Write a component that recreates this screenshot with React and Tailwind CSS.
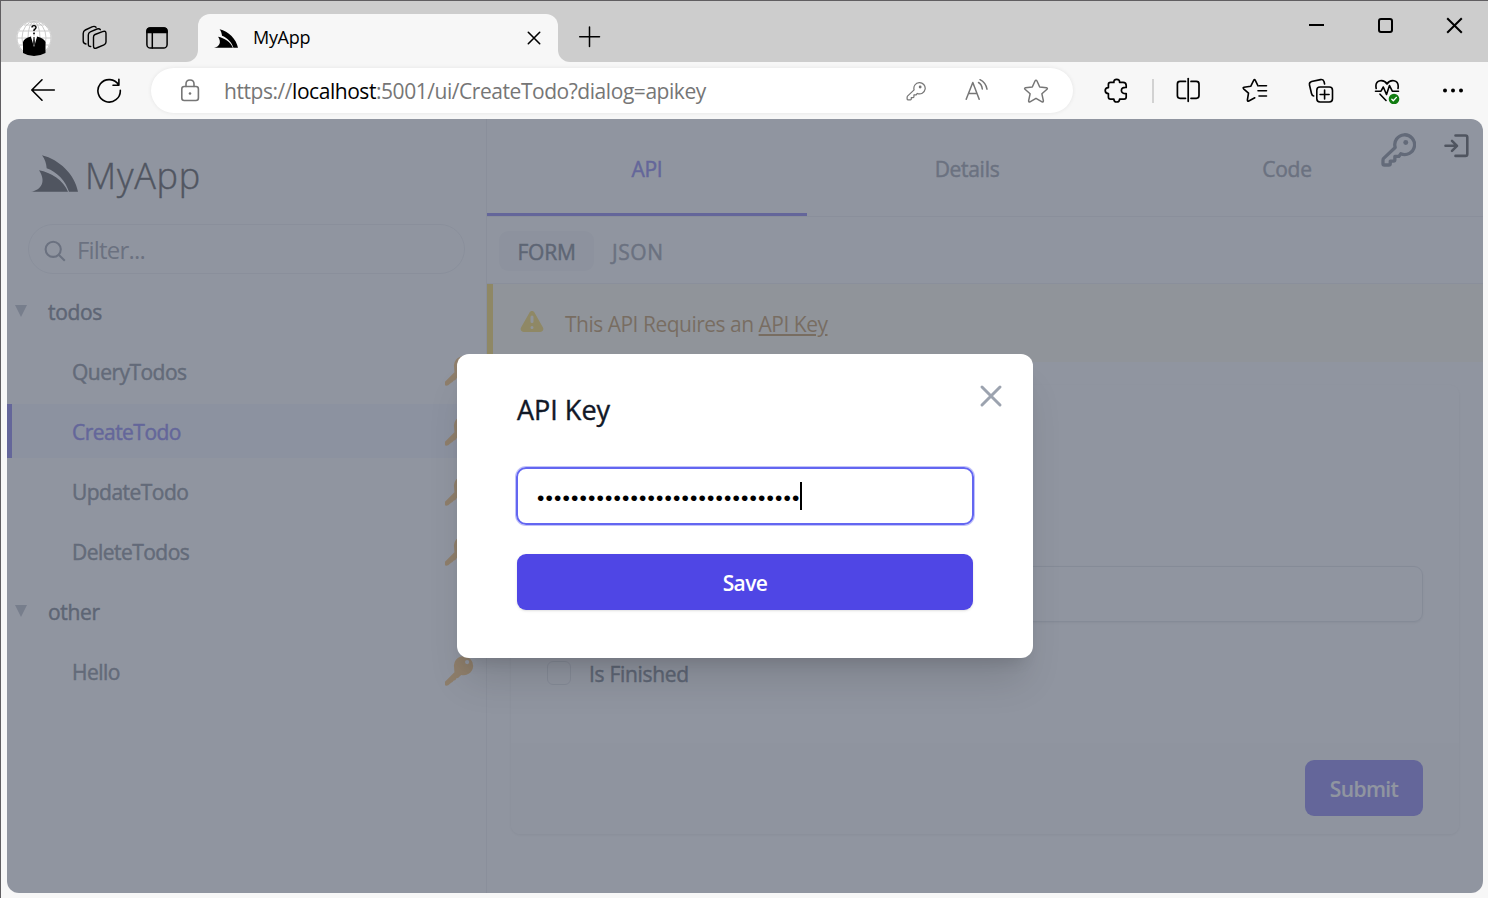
import React from 'react';

const Icon = ({ className = 'size-[26px]', box = '0 0 26 26', sw = 1.5, children }) => (
  <svg className={`shrink-0 ${className}`} viewBox={box} fill="none" stroke="currentColor" strokeWidth={sw} strokeLinecap="round" strokeLinejoin="round">
    {children}
  </svg>
);

const Logo = ({ className }) => (
  <svg className={`shrink-0 ${className}`} viewBox="0 0 141 110" fill="currentColor">
    <path d="M33 0C85 13 132 58 141 110H114C104 77 78 50 47 39C46 25 42 12 33 0Z" />
    <path d="M24 45C60 52 98 75 111 110H0C32 104 46 78 24 45Z" />
  </svg>
);

const KeyOutline = ({ className, sw }) => (
  <Icon className={className} box="0 0 106 106" sw={sw}>
    <path d="M43 47L8 80Q6 82 6 86V96Q6 100 10 100H24Q28 100 28 96V88H38Q42 88 42 84V74H54L60 66A30 30 0 1 0 43 47Z" />
    <circle cx="75" cy="32" r="7.5" fill="currentColor" stroke="none" />
  </Icon>
);

const KeySolid = () => (
  <svg className="h-[30px] w-[30px] shrink-0 text-[#f5a52e]" viewBox="0 0 90 92" fill="currentColor">
    <path fillRule="evenodd" d="M58 1A29 29 0 1 1 52 58L46 64Q43 69 37 68Q36 75 28 76Q26 81 21 82L12 90Q2 93 2 88V79L31 50L30 36A29 29 0 0 1 58 1ZM70 12A6.5 6.5 0 1 0 70 25A6.5 6.5 0 1 0 70 12Z" />
  </svg>
);

const Avatar = () => (
  <svg className="size-[36px] shrink-0" viewBox="0 0 36 36">
    <circle cx="18" cy="18" r="17.4" fill="#fff" />
    <g fill="none" stroke="#c4c4c4" strokeWidth="0.9">
      <circle cx="18" cy="18" r="17" />
      <ellipse cx="18" cy="18" rx="12" ry="16.5" />
      <ellipse cx="18" cy="18" rx="6" ry="16.5" />
      <path d="M18 1v34M1 18h34M3 11h30M3 25h30M8 5h20" />
    </g>
    <path d="M7 22Q8 18 15 16.5L18 18L21 16.5Q28 18 29.5 22V33Q24 36 18 36Q12 36 7 33Z" fill="#000" />
    <path d="M14.8 16.3L18 27L21.2 16.3Z" fill="#fff" />
    <path d="M17.4 17h1.2l.6 7-1.2 2-1.2-2Z" fill="#333" />
    <path d="M16 7.5Q16 5.6 18 5.6T20 7.5Q20 8.6 18 10V11" fill="none" stroke="#000" strokeWidth="1.4" />
    <circle cx="18" cy="13.4" r="0.9" />
  </svg>
);

const TitleBar = () => (
  <div className="flex h-[61px] bg-[#cdcdcd] text-black">
    <div className="flex w-[185px] items-center pt-[13px] pl-[15px]">
      <Avatar />
      <Icon className="ml-[30px] size-[26px]" sw={1.4}>
        <path d="M13 9.5L20.5 6.6Q24 5.4 24 8.5V17Q24 19 22 19.8L14.5 23Q11.5 24.2 11.5 21V12Q11.5 10.2 13 9.5Z" />
        <path d="M8.7 21.5Q6.3 21.6 6.3 19V10Q6.3 7.6 8.3 6.8L15 4Q17.5 3.2 18.3 4.7" />
        <path d="M4 19Q1.2 18.5 1.2 16V8.5Q1.2 6 3.3 5L10 1.8Q12.6 .8 14 2.2" />
      </Icon>
      <Icon className="mb-px ml-[36px] size-[26px]" sw={1.5}>
        <rect x="2.9" y="2.9" width="20.2" height="20.2" rx="3.6" />
        <path d="M3 7.5V6Q3 3 6 3H20Q23 3 23 6V7.5Z" fill="currentColor" />
        <path d="M8.3 8V23" />
      </Icon>
    </div>
    <div className="size-3 self-end bg-[#f7f7f7]">
      <div className="size-3 rounded-br-[12px] bg-[#cdcdcd]" />
    </div>
    <div className="mt-[13px] flex w-[360px] items-center rounded-t-[12px] bg-[#f7f7f7] pl-4">
      <Logo className="h-[19px] w-[24px]" />
      <span className="mb-px ml-[15px] flex-1 text-[18px] tracking-[-0.3px]">MyApp</span>
      <Icon className="mr-[11px] size-[26px]" sw={1.6}>
        <path d="M7.3 7.3L18.7 18.7M18.7 7.3L7.3 18.7" />
      </Icon>
    </div>
    <div className="size-3 self-end bg-[#f7f7f7]">
      <div className="size-3 rounded-bl-[12px] bg-[#cdcdcd]" />
    </div>
    <Icon className="mt-[23px] ml-[7px] size-[26px]" sw={1.5}>
      <path d="M12.5 3V22.5M2.7 12.8H22.5" />
    </Icon>
    <div className="mr-[21px] ml-auto flex gap-[43px] pt-[11px]">
      <Icon sw={2}><path strokeLinecap="butt" d="M6 13H21" /></Icon>
      <Icon sw={2}><rect x="7" y="7" width="13" height="13" rx="2" /></Icon>
      <Icon sw={2}><path strokeLinecap="butt" d="M6.2 6.2L20.8 20.8M20.8 6.2L6.2 20.8" /></Icon>
    </div>
  </div>
);

const AddressBar = () => (
  <div className="flex h-[45px] w-[922px] items-center rounded-full bg-white pr-6 pl-[26px] text-[#767676] shadow-[0_0_4px_rgba(0,0,0,0.08)]">
    <Icon sw={1.6}>
      <rect x="4.8" y="8.5" width="16.6" height="14" rx="2.4" />
      <path d="M9 8.5V6Q9 2 13 2T17 6V8.5" />
      <circle cx="13" cy="15.5" r="1.3" fill="currentColor" stroke="none" />
    </Icon>
    <div className="ml-[21px] flex-1 pt-[2px] text-[21px] whitespace-nowrap tracking-[-0.45px]">
      https://<span className="text-black">localhost</span>:5001/ui/CreateTodo?dialog=apikey
    </div>
    <div className="flex gap-[34px]">
      <div className="flex size-[26px] items-center justify-center"><KeyOutline className="size-[20px]" sw={6.5} /></div>
      <Icon sw={1.5}>
        <path d="M3.2 21.2L9.8 4.5L16.2 21.2M5.4 15.6H14" />
        <path d="M15.5 4.5Q18.8 6.3 19.3 11M17 1.7Q22.8 4.6 24 11.2" />
      </Icon>
      <Icon sw={1.5}>
        <path d="M13 2.3Q13.6 2.3 14 3L16.7 9L23.5 9.8Q25 10.2 24 11.3L18.9 15.8L20.4 22.8Q20.4 24.4 19 23.8L13 20.3L7 23.8Q5.6 24.4 5.6 22.8L7.1 15.8L2 11.3Q1 10.2 2.5 9.8L9.3 9L12 3Q12.4 2.3 13 2.3Z" />
      </Icon>
    </div>
  </div>
);

const Toolbar = () => (
  <div className="flex h-[57px] items-center bg-[#f7f7f7] pl-[29px] text-black">
    <Icon className="mb-[2px] size-[26px]" sw={1.6}><path d="M12 2.8L1.8 13L12 23.2M2 13H24.3" /></Icon>
    <Icon className="mb-[2px] ml-10 size-[26px]" sw={1.6}>
      <path d="M22.8 8.2A11.2 11.2 0 1 0 24.3 13.2M22.9 2.2V8.2H17" />
    </Icon>
    <div className="ml-[29px]"><AddressBar /></div>
    <Icon className="ml-[30px] size-[26px]" sw={1.7}>
      <path d="M7.5 4.4H10.9Q10.6 1.4 13.7 1.4T16.6 4.4H20Q23.2 4.4 23.2 7.4V9.4Q18.4 9.1 18.4 12.4T23.2 15.6V19Q23.2 21.2 21 21.2H16.6Q16.5 24 13.7 24T10.9 21.2H7.5Q5.4 21.2 5.4 19V15.6Q2.2 15.6 2.2 12.6T5.4 9.6V6.4Q5.4 4.4 7.5 4.4Z" />
    </Icon>
    <div className="ml-[23px] h-6 w-[2px] bg-[#d2d2d2]" />
    <Icon className="mb-px ml-[21px] size-[26px]" sw={1.7}>
      <path d="M13.2 1.5V24.3" />
      <path d="M10.5 4.4H5Q2.4 4.4 2.4 7V18.6Q2.4 21.3 5 21.3H10.5M16 4.4H21.3Q24 4.4 24 7V18.6Q24 21.3 21.3 21.3H16" />
    </Icon>
    <Icon className="mb-px ml-[41px] size-[26px]" sw={1.6}>
      <path d="M16 8.8L13.2 3.2Q12.5 1.8 11.8 3.2L8.7 9.3L2 10.2Q.5 10.6 1.6 11.8L6.5 16.2L5.4 23Q5.3 24.6 6.8 24L12.8 20.8" />
      <path d="M17 8.8H24.5M16 13.8H24.5M17 19H24.5" />
    </Icon>
    <Icon className="ml-10 size-[26px]" sw={1.6}>
      <path d="M5.7 18Q4 17.8 3.5 15.5L1.5 7Q1 4.3 3.6 3.5L12.5 1.6Q15 1.1 16 3.5L16.6 6" />
      <rect x="8.8" y="9" width="15.7" height="15" rx="3.2" />
      <path d="M16.6 12V21M12.1 16.5H21.1" />
    </Icon>
    <Icon className="ml-10 size-[26px]" sw={1.6}>
      <path d="M2.2 10.5Q.8 4 6 2.8Q10.5 2 13 6Q15.5 2 20 2.8Q25.2 4 24 10.5" />
      <path d="M1.5 13.2H7L9.3 9L12.5 16.5L15.5 7.5L18.3 13.2H24.5M6 16.2L12 22.5" />
      <circle cx="20" cy="21" r="5.3" fill="#107c10" stroke="none" />
      <path d="M17.8 21.2L19.3 22.8L22.4 19.4" stroke="#fff" strokeWidth="1.3" />
    </Icon>
    <Icon className="ml-10 size-[26px]">
      <g fill="currentColor" stroke="none">
        <circle cx="5" cy="12.4" r="2" /><circle cx="13" cy="12.4" r="2" /><circle cx="21" cy="12.4" r="2" />
      </g>
    </Icon>
  </div>
);

const Group = ({ name }) => (
  <div className="mb-[6px] flex h-[54px] items-center pl-2">
    <svg className="h-3 w-3 text-[#9ca3af]" viewBox="0 0 12 12" fill="currentColor"><path d="M0 0H12L6 12Z" /></svg>
    <span className="ml-[21px] pt-[3px] text-[21px] tracking-[-0.35px] text-[#374151] [-webkit-text-stroke:0.5px]">{name}</span>
  </div>
);

const Op = ({ name, active }) => (
  <div className={`mb-[6px] flex h-[54px] items-center justify-between border-l-[5px] pr-3 pl-[60px] ${active ? 'border-[#4f46e5] bg-[#eef2ff] text-[#4f46e5]' : 'border-transparent text-[#4b5563]'}`}>
    <span className="pt-[3px] text-[21px] tracking-[-0.53px] [-webkit-text-stroke:0.5px]">{name}</span>
    <KeySolid />
  </div>
);

const Sidebar = () => (
  <aside className="w-[480px] shrink-0 border-r border-[#e5e7eb]">
    <div className="flex h-[105px] items-start pt-9 pl-6 text-black">
      <Logo className="h-[37px] w-[47px]" />
      <span className="mt-[-3px] ml-[7px] text-[36px] leading-[48px] font-light tracking-[0.8px] [-webkit-text-stroke:0.5px]">MyApp</span>
    </div>
    <div className="ml-[21px] flex h-[50px] w-[437px] items-center rounded-full border border-[#e5e7eb] pl-[15px] text-[#6b7280]">
      <Icon className="mt-[3px] size-[24px]" box="0 0 24 24" sw={2.1}>
        <circle cx="9.2" cy="10.3" r="7.6" /><path strokeLinecap="butt" d="M14.7 15.8L20.8 21.8" />
      </Icon>
      <span className="ml-[9px] pt-[2px] text-[24px] tracking-[-0.8px]">Filter...</span>
    </div>
    <nav className="mt-[10px]">
      <Group name="todos" />
      <Op name="QueryTodos" />
      <Op name="CreateTodo" active />
      <Op name="UpdateTodo" />
      <Op name="DeleteTodos" />
      <Group name="other" />
      <Op name="Hello" />
    </nav>
  </aside>
);

const Tab = ({ name, active }) => (
  <div className={`flex w-[320px] items-center justify-center border-b-[3px] pt-[8px] text-[21px] tracking-[-0.3px] [-webkit-text-stroke:0.5px] ${active ? 'border-[#4f46e5] text-[#4f46e5]' : 'border-transparent text-[#6b7280]'}`}>
    {name}
  </div>
);

const Main = () => (
  <main className="flex min-w-0 flex-1 flex-col">
    <div className="relative flex h-[98px] border-b border-[#e5e7eb]">
      <Tab name="API" active />
      <Tab name="Details" />
      <Tab name="Code" />
      <div className="absolute top-[13px] right-[13px] flex items-start gap-[27px]">
        <span className="text-[#4b5563]"><KeyOutline className="size-[35px]" sw={10} /></span>
        <Icon className="size-[27px] text-black" box="0 0 27 27" sw={2.6}>
          <path d="M12.5 3.5H22.5Q24.3 3.5 24.3 5.5V22Q24.3 23.9 22.5 23.9H12.5M2.5 13.8H13.5M9 8.8L14 13.8L9 18.8" />
        </Icon>
      </div>
    </div>
    <div className="flex h-[67px] items-center gap-[18px] border-b border-[#e5e7eb] pt-[2px] pl-3 text-[21px] [-webkit-text-stroke:0.5px]">
      <span className="flex h-10 w-[95px] items-center justify-center rounded-[9px] bg-[#f3f4f6] pt-1 tracking-[-0.2px] text-[#374151]">FORM</span>
      <span className="pt-1 tracking-[0.6px] text-[#6b7280]">JSON</span>
    </div>
    <div className="flex h-[78px] shrink-0 items-center border-l-6 border-[#facc15] bg-[#fefce8] pl-6">
      <svg className="h-[30px] w-[30px] text-[#facc15]" viewBox="0 0 20 20" fill="currentColor">
        <path fillRule="evenodd" clipRule="evenodd" d="M8.257 3.099c.765-1.36 2.722-1.36 3.486 0l5.58 9.92c.75 1.334-.213 2.98-1.742 2.98H4.42c-1.53 0-2.493-1.646-1.743-2.98l5.58-9.92zM11 13a1 1 0 11-2 0 1 1 0 012 0zm-1-8a1 1 0 00-1 1v3a1 1 0 002 0V6a1 1 0 00-1-1z" />
      </svg>
      <p className="ml-[18px] pt-1 text-[21px] tracking-[-0.5px] text-[#a16207]">
        This API Requires an <span className="underline decoration-2 underline-offset-[2px]">API Key</span>
      </p>
    </div>
    <div className="mt-[23px] ml-6 flex h-[449px] w-[948px] flex-col overflow-hidden rounded-[9px] shadow-[0_1px_3px_rgba(0,0,0,0.13)]">
      <div className="flex-1 px-9 pt-[181px]">
        <div className="h-[56px] rounded-[9px] border border-[#d1d5db] shadow-sm" />
        <div className="mt-[39px] flex h-6 items-center">
          <div className="size-6 rounded-[6px] border border-[#d1d5db]" />
          <span className="ml-[18px] pt-[3px] text-[21px] tracking-[-0.3px] text-[#374151] [-webkit-text-stroke:0.5px]">Is Finished</span>
        </div>
      </div>
      <div className="flex h-[91px] items-center justify-end bg-[#f9fafb] px-9">
        <div className="mb-[2px] flex h-14 w-[118px] items-center justify-center rounded-[9px] bg-[#4f46e5] pt-1 text-[21px] font-semibold tracking-[-0.6px] text-white">Submit</div>
      </div>
    </div>
  </main>
);

const Dialog = () => (
  <div className="absolute inset-0 flex items-center justify-center bg-[#6b7280]/75">
    <div className="h-[304px] w-[576px] rounded-[12px] bg-white px-[60px] pt-[24px] shadow-[0_30px_38px_-8px_rgba(0,0,0,0.12),0_12px_15px_-9px_rgba(0,0,0,0.12)]">
      <div className="flex h-[89px] justify-between">
        <h2 className="pt-[11px] text-[27px] leading-[42px] tracking-[0px] text-[#111827] [-webkit-text-stroke:0.4px]">API Key</h2>
        <Icon className="-mr-[36px] size-[36px] text-[#9ca3af]" box="0 0 24 24" sw={2}>
          <path d="M6 18L18 6M6 6l12 12" />
        </Icon>
      </div>
      <div className="-mx-px flex h-[58px] items-center rounded-[10px] border-2 border-[#6366f1] pl-[19px] text-black ring-1 ring-[#6366f1]/40">
        <span className="pt-1 font-['Liberation_Sans',sans-serif] text-[21px] tracking-[1.15px]">•••••••••••••••••••••••••••••••</span>
        <span className="-ml-px h-7 w-[2px] bg-black" />
      </div>
      <div className="mt-[29px] flex h-14 items-center justify-center rounded-[9px] bg-[#4f46e5] pt-1 text-[21px] font-semibold tracking-[-0.6px] text-white shadow-sm">Save</div>
    </div>
  </div>
);

export default function App() {
  return (
    <div className="h-[898px] w-[1488px] overflow-hidden border-t border-l border-[#605e61] bg-[#f7f7f7] font-['Open_Sans',sans-serif]">
      <TitleBar />
      <Toolbar />
      <div className="relative ml-[6px] flex h-[774px] w-[1476px] overflow-hidden rounded-[12px] bg-white">
        <Sidebar />
        <Main />
        <Dialog />
      </div>
    </div>
  );
}
